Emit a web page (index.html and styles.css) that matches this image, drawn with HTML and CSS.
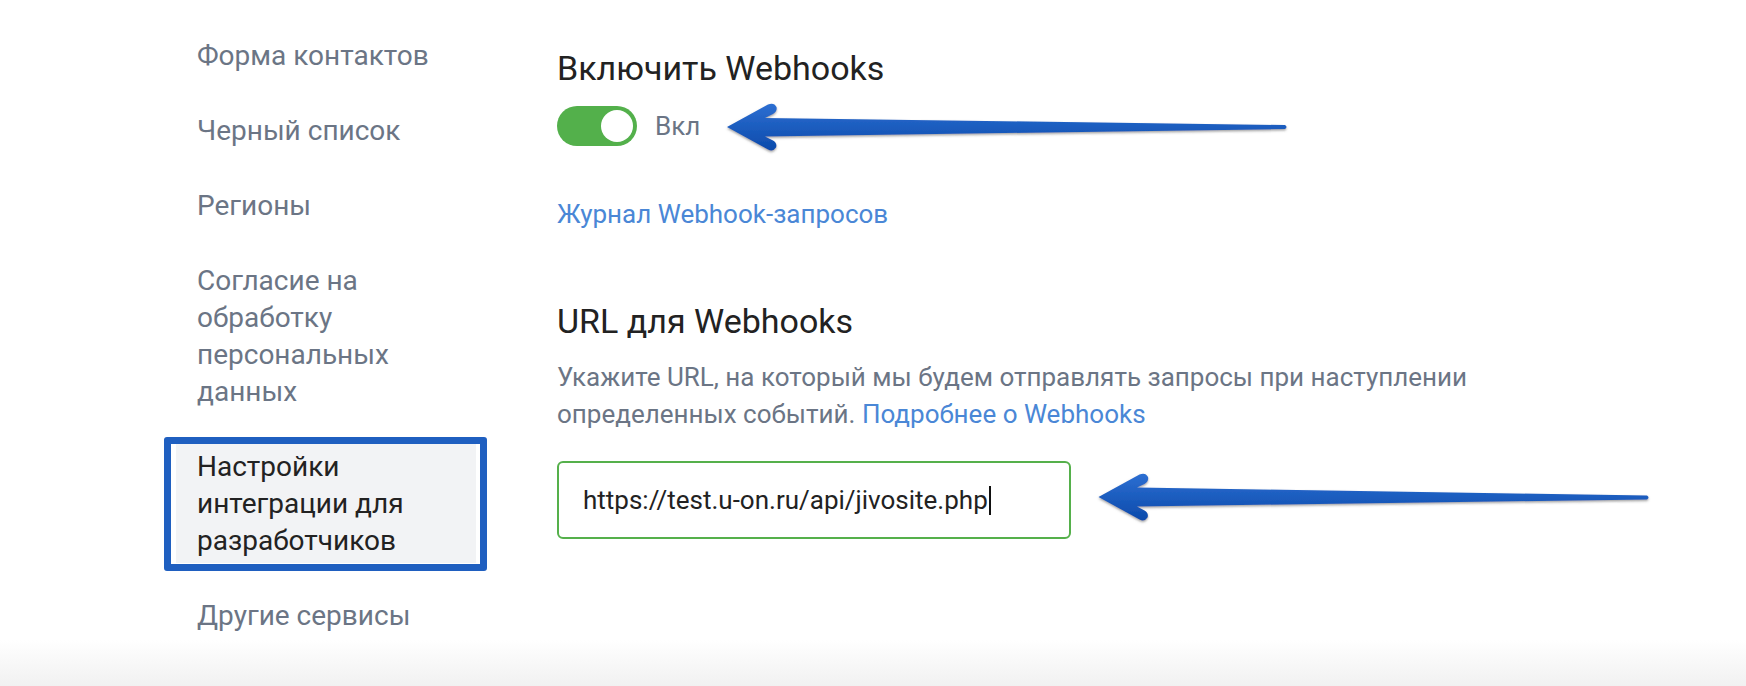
FILE: index.html
```html
<!DOCTYPE html>
<html lang="ru">
<head>
<meta charset="utf-8">
<title>Webhooks</title>
<link rel="stylesheet" href="styles.css">
</head>
<body>
<div class="page">
  <nav class="sidebar">
    <div class="nav-item">Форма контактов</div>
    <div class="nav-item">Черный список</div>
    <div class="nav-item">Регионы</div>
    <div class="nav-item">Согласие на<br>обработку<br>персональных<br>данных</div>
    <div class="nav-item active">Настройки<br>интеграции для<br>разработчиков</div>
    <div class="nav-item">Другие сервисы</div>
  </nav>
  <main class="content">
    <h2 class="title">Включить Webhooks</h2>
    <div class="toggle-row">
      <span class="toggle"><span class="knob"></span></span>
      <span class="toggle-label">Вкл</span>
    </div>
    <a class="log-link" href="#">Журнал Webhook-запросов</a>
    <h2 class="title title-url">URL для Webhooks</h2>
    <p class="desc">Укажите URL, на который мы будем отправлять запросы при наступлении определенных событий. <a class="inline-link" href="#">Подробнее о Webhooks</a></p>
    <div class="url-field">https://test.u-on.ru/api/jivosite.php<span class="caret"></span></div>
  </main>
  <svg class="arrows" width="1746" height="686" viewBox="0 0 1746 686" xmlns="http://www.w3.org/2000/svg">
    <defs>
      <linearGradient id="ag1" x1="0" y1="0" x2="0" y2="1">
        <stop offset="0" stop-color="#2d6fd2"/>
        <stop offset="1" stop-color="#0b4aab"/>
      </linearGradient>
      <filter id="sh" x="-5%" y="-50%" width="110%" height="200%">
        <feDropShadow dx="0" dy="1.5" stdDeviation="0.8" flood-color="#555" flood-opacity="0.55"/>
      </filter>
    </defs>
    <path filter="url(#sh)" fill="url(#ag1)" d="M727 127 L768 104.5 Q774 102 776.5 107 Q777.5 111.5 773 114 L765 118 L1285 125 Q1288 127 1285 129 L765 136.5 L773 140.5 Q777.5 143 776 147.5 Q773 152 768 149.5 Z"/>
    <path filter="url(#sh)" fill="url(#ag1)" d="M1098.5 497 L1139.5 474.5 Q1145.5 472 1148 477 Q1149 481.5 1144.5 484 L1137 487.5 L1647 495.5 Q1650 497.5 1647 499.5 L1137 506.5 L1144.5 510.5 Q1149 513 1147.5 517.5 Q1144.5 522 1139.5 519.5 Z"/>
  </svg>
</div>
</body>
</html>
```
FILE: styles.css
```css
* { box-sizing: border-box; }
html, body { margin: 0; padding: 0; }
body {
  font-family: Roboto, "Noto Sans", "Liberation Sans", sans-serif;
  background: #fff;
}
.page {
  position: relative;
  display: flex;
  align-items: flex-start;
  min-height: 686px;
  padding-left: 176px;
  background: linear-gradient(to bottom, #fff 0, #fff 640px, #f1f1f1 686px);
}
.sidebar {
  width: 300px;
  flex: none;
  padding-top: 33px;
  display: flex;
  flex-direction: column;
  gap: 30px;
}
.nav-item {
  padding: 4px 21px;
  font-size: 28px;
  line-height: 37px;
  color: #6b7585;
}
.nav-item.active {
  position: relative;
  background: #f2f3f5;
  color: #222;
}
.nav-item.active::after {
  content: "";
  position: absolute;
  top: -7px;
  bottom: -8px;
  left: -12px;
  right: -11px;
  border: 7.5px solid #1f5fc0;
  border-radius: 3px;
}
.content {
  margin-left: 81px;
  padding-top: 49px;
  display: flex;
  flex-direction: column;
  align-items: flex-start;
}
.title {
  margin: 0;
  font-size: 34px;
  line-height: 39px;
  font-weight: 400;
  color: #222;
}
.toggle-row {
  margin-top: 18px;
  display: flex;
  align-items: center;
  gap: 18px;
}
.toggle {
  width: 80px;
  height: 40px;
  border-radius: 20px;
  background: #53b04b;
  display: flex;
  align-items: center;
  justify-content: flex-end;
  padding-right: 4px;
}
.knob {
  width: 32px;
  height: 32px;
  border-radius: 50%;
  background: #fff;
}
.toggle-label {
  font-size: 26px;
  line-height: 37px;
  color: #6b7585;
}
.log-link {
  margin-top: 50px;
  font-size: 26px;
  line-height: 37px;
  color: #4a87d6;
  text-decoration: none;
}
.title-url {
  margin-top: 69px;
}
.desc {
  margin: 18px 0 0;
  max-width: 940px;
  font-size: 26px;
  line-height: 36.5px;
  color: #6b7585;
}
.inline-link {
  color: #4a87d6;
  text-decoration: none;
}
.url-field {
  margin-top: 29px;
  width: 514px;
  height: 78px;
  border: 2px solid #55b04b;
  border-radius: 6px;
  padding-left: 24px;
  display: flex;
  align-items: center;
  font-size: 26px;
  line-height: 37px;
  color: #222;
}
.caret {
  display: inline-block;
  width: 2px;
  height: 29px;
  margin-left: 1px;
  background: #111;
}
.arrows {
  position: absolute;
  left: 0;
  top: 0;
  pointer-events: none;
}
```
